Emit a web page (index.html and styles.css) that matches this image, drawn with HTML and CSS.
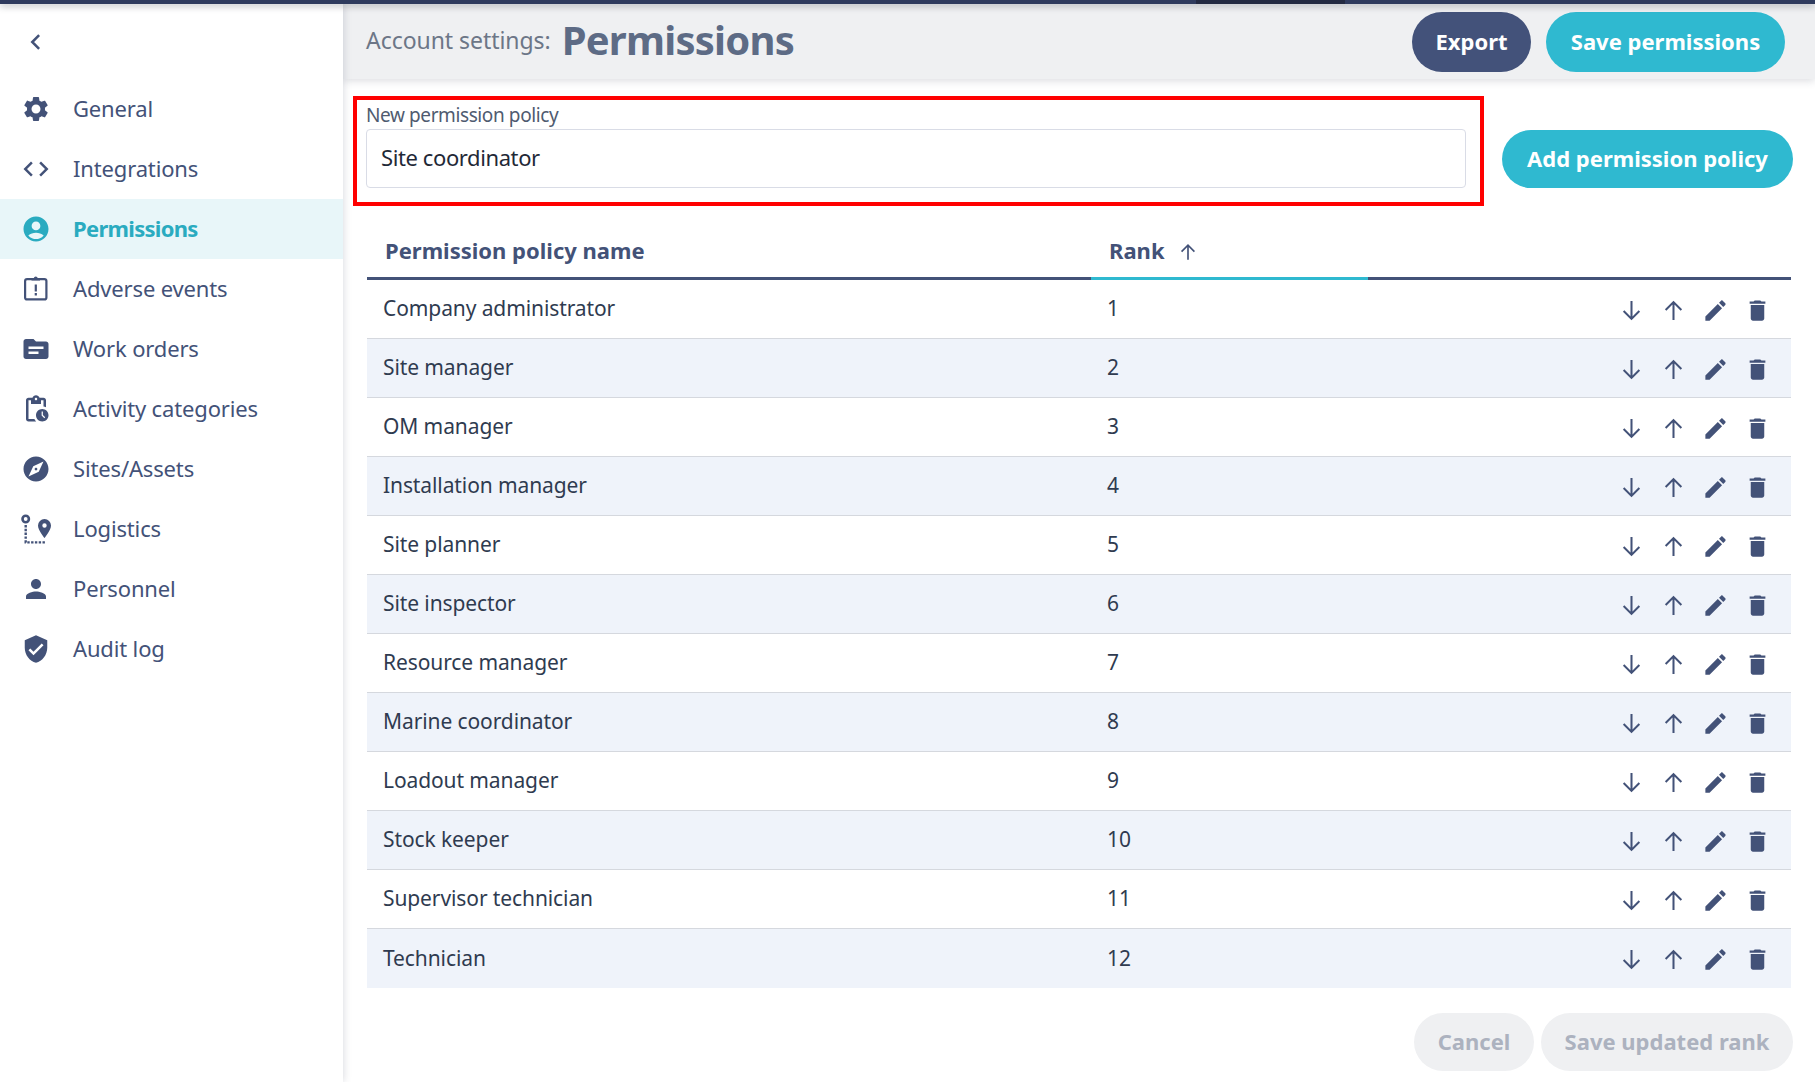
FILE: index.html
```html
<!DOCTYPE html>
<html lang="en">
<head>
<meta charset="utf-8">
<title>Permissions</title>
<link rel="stylesheet" href="styles.css">
</head>
<body>
<svg class="defs" aria-hidden="true">
  <symbol id="i-down" viewBox="0 0 24 24"><path d="M12 3.500v16M5 12.500l7 7 7-7" fill="none" stroke="currentColor" stroke-width="1.800"/></symbol>
  <symbol id="i-up" viewBox="0 0 24 24"><path d="M12 20.500v-16M5 11.500l7-7 7 7" fill="none" stroke="currentColor" stroke-width="1.800"/></symbol>
  <symbol id="i-edit" viewBox="0 0 24 24"><path d="M3 17.250V21h3.750L17.810 9.940l-3.750-3.750L3 17.250zM20.710 7.040c.39-.39.39-1.020 0-1.410l-2.340-2.340c-.39-.39-1.020-.39-1.410 0l-1.830 1.830 3.750 3.750 1.830-1.830z"/></symbol>
  <symbol id="i-trash" viewBox="0 0 24 24"><path d="M6 19c0 1.100.9 2 2 2h8c1.100 0 2-.9 2-2V7H6v12zM19 4h-3.500l-1-1h-5l-1 1H5v2h14V4z"/></symbol>
</svg>
<div class="topbar"><div class="topbar-seg"></div></div>
<div class="app">
  <nav class="sidebar">
    <button class="back" type="button" aria-label="Back">
      <svg class="ico" viewBox="0 0 24 24"><path d="M14.500 6.500L9 12l5.500 5.500" fill="none" stroke="currentColor" stroke-width="2"/></svg>
    </button>
    <ul class="menu">
      <li class="item"><svg class="ico" viewBox="0 0 24 24"><path d="M19.140 12.940c.04-.3.06-.61.06-.94 0-.32-.02-.64-.07-.94l2.030-1.580c.18-.14.23-.41.12-.61l-1.920-3.320c-.12-.22-.37-.29-.59-.22l-2.390.96c-.5-.38-1.030-.7-1.620-.94l-.36-2.540c-.04-.24-.24-.41-.48-.41h-3.840c-.24 0-.43.17-.47.41l-.36 2.540c-.59.24-1.130.57-1.620.94l-2.390-.96c-.22-.08-.47 0-.59.22L2.740 8.870c-.12.21-.08.47.12.61l2.030 1.580c-.05.3-.09.63-.09.94s.02.64.07.94l-2.030 1.580c-.18.14-.23.41-.12.61l1.920 3.320c.12.22.37.29.59.22l2.390-.96c.5.38 1.030.7 1.620.94l.36 2.540c.05.24.24.41.48.41h3.840c.24 0 .44-.17.47-.41l.36-2.540c.59-.24 1.130-.56 1.620-.94l2.390.96c.22.08.47 0 .59-.22l1.920-3.320c.12-.22.07-.47-.12-.61l-2.010-1.580zM12 15.600c-1.980 0-3.600-1.620-3.600-3.600s1.620-3.600 3.600-3.600 3.600 1.620 3.600 3.600-1.620 3.600-3.600 3.600z"/></svg><span>General</span></li>
      <li class="item"><svg class="ico" viewBox="0 0 24 24"><path d="M9.400 16.600L4.800 12l4.600-4.600L8 6l-6 6 6 6 1.400-1.400zm5.200 0l4.600-4.600-4.600-4.600L16 6l6 6-6 6-1.400-1.400z"/></svg><span>Integrations</span></li>
      <li class="item active"><svg class="ico" viewBox="0 0 24 24"><path d="M12 2C6.480 2 2 6.480 2 12s4.480 10 10 10 10-4.480 10-10S17.520 2 12 2zm0 4c1.930 0 3.500 1.570 3.500 3.500S13.930 13 12 13s-3.500-1.570-3.500-3.500S10.070 6 12 6zm0 14c-2.030 0-4.430-.82-6.140-2.880C7.550 15.800 9.680 15 12 15s4.450.8 6.140 2.120C16.430 19.180 14.030 20 12 20z"/></svg><span>Permissions</span></li>
      <li class="item"><svg class="ico" viewBox="0 0 30 30"><rect x="4.100" y="5.100" width="21.300" height="20.300" rx="2" fill="none" stroke="currentColor" stroke-width="2.200"/><path d="M10.500 6.500V4h2.300a2 2 0 0 1 3.900 0H19v2.500z"/><path d="M13.700 10.500h2.200v7h-2.200zM13.700 19h2.200v2.400h-2.200z"/></svg><span>Adverse events</span></li>
      <li class="item"><svg class="ico" viewBox="0 0 24 24"><path d="M20 6h-8l-2-2H4c-1.100 0-2 .9-2 2v12c0 1.100.9 2 2 2h16c1.100 0 2-.9 2-2V8c0-1.100-.9-2-2-2zm-6 10H6v-2h8v2zm4-4H6v-2h12v2z"/></svg><span>Work orders</span></li>
      <li class="item"><svg class="ico" viewBox="0 0 24 24"><path d="M17 12c-2.760 0-5 2.240-5 5s2.240 5 5 5 5-2.240 5-5-2.240-5-5-5zm1.650 7.350L16.500 17.200V14h1v2.790l1.850 1.850-.7.710zM18 3h-3.180C14.400 1.840 13.300 1 12 1s-2.400.84-2.820 2H6c-1.100 0-2 .9-2 2v15c0 1.100.9 2 2 2h6.110c-.59-.57-1.070-1.250-1.400-2H6V5h2v3h8V5h2v5.080c.71.1 1.380.31 2 .6V5c0-1.100-.9-2-2-2zm-6 2c-.55 0-1-.45-1-1s.45-1 1-1 1 .45 1 1-.45 1-1 1z"/></svg><span>Activity categories</span></li>
      <li class="item"><svg class="ico" viewBox="0 0 24 24"><path d="M12 10.900c-.61 0-1.100.49-1.100 1.100s.49 1.100 1.100 1.100c.61 0 1.100-.49 1.100-1.100s-.49-1.100-1.100-1.100zM12 2C6.480 2 2 6.480 2 12s4.480 10 10 10 10-4.480 10-10S17.520 2 12 2zm2.190 12.190L6 18l3.810-8.190L18 6l-3.810 8.190z"/></svg><span>Sites/Assets</span></li>
      <li class="item"><svg class="ico" viewBox="0 0 30 30"><circle cx="4.700" cy="5" r="3.200" fill="none" stroke="currentColor" stroke-width="2.600"/><path d="M4.700 11v17.400H25" fill="none" stroke="currentColor" stroke-width="2.400" stroke-dasharray="2.400 1.400"/><path fill-rule="evenodd" d="M23.500 5a6.500 6.500 0 0 0-6.500 6.500c0 4.700 6.500 12.500 6.500 12.500S30 16.200 30 11.500A6.500 6.500 0 0 0 23.500 5zm0 4.300a2.200 2.200 0 1 1 0 4.400 2.200 2.200 0 0 1 0-4.400z"/></svg><span>Logistics</span></li>
      <li class="item"><svg class="ico" viewBox="0 0 24 24"><path d="M12 12c2.210 0 4-1.790 4-4s-1.790-4-4-4-4 1.790-4 4 1.790 4 4 4zm0 2c-2.670 0-8 1.340-8 4v2h16v-2c0-2.660-5.330-4-8-4z"/></svg><span>Personnel</span></li>
      <li class="item"><svg class="ico" viewBox="0 0 24 24"><path d="M12 1L3 5v6c0 5.550 3.840 10.740 9 12 5.160-1.260 9-6.450 9-12V5l-9-4zm-2 16l-4-4 1.410-1.410L10 14.170l6.590-6.590L18 9l-8 8z"/></svg><span>Audit log</span></li>
    </ul>
  </nav>
  <main class="content">
    <header class="header">
      <div class="heading"><span class="crumb">Account settings:</span><h1 class="title">Permissions</h1></div>
      <div class="actions">
        <button class="btn btn-navy btn-export" type="button">Export</button>
        <button class="btn btn-teal btn-save" type="button">Save permissions</button>
      </div>
    </header>
    <section class="form-row">
      <div class="field-box">
        <label class="field-label" for="policy">New permission policy</label>
        <input class="field-input" id="policy" type="text" value="Site coordinator">
      </div>
      <button class="btn btn-teal btn-add" type="button">Add permission policy</button>
    </section>
    <table class="grid">
      <colgroup><col class="c-name"><col class="c-rank"><col></colgroup>
      <thead>
        <tr>
          <th>Permission policy name</th>
          <th class="sorted">Rank<svg class="sort-ico"><use href="#i-up"/></svg></th>
          <th></th>
        </tr>
      </thead>
      <tbody>
        <tr><td>Company administrator</td><td>1</td><td class="ops"><svg class="op thin"><use href="#i-down"/></svg><svg class="op thin"><use href="#i-up"/></svg><svg class="op"><use href="#i-edit"/></svg><svg class="op"><use href="#i-trash"/></svg></td></tr>
        <tr><td>Site manager</td><td>2</td><td class="ops"><svg class="op thin"><use href="#i-down"/></svg><svg class="op thin"><use href="#i-up"/></svg><svg class="op"><use href="#i-edit"/></svg><svg class="op"><use href="#i-trash"/></svg></td></tr>
        <tr><td>OM manager</td><td>3</td><td class="ops"><svg class="op thin"><use href="#i-down"/></svg><svg class="op thin"><use href="#i-up"/></svg><svg class="op"><use href="#i-edit"/></svg><svg class="op"><use href="#i-trash"/></svg></td></tr>
        <tr><td>Installation manager</td><td>4</td><td class="ops"><svg class="op thin"><use href="#i-down"/></svg><svg class="op thin"><use href="#i-up"/></svg><svg class="op"><use href="#i-edit"/></svg><svg class="op"><use href="#i-trash"/></svg></td></tr>
        <tr><td>Site planner</td><td>5</td><td class="ops"><svg class="op thin"><use href="#i-down"/></svg><svg class="op thin"><use href="#i-up"/></svg><svg class="op"><use href="#i-edit"/></svg><svg class="op"><use href="#i-trash"/></svg></td></tr>
        <tr><td>Site inspector</td><td>6</td><td class="ops"><svg class="op thin"><use href="#i-down"/></svg><svg class="op thin"><use href="#i-up"/></svg><svg class="op"><use href="#i-edit"/></svg><svg class="op"><use href="#i-trash"/></svg></td></tr>
        <tr><td>Resource manager</td><td>7</td><td class="ops"><svg class="op thin"><use href="#i-down"/></svg><svg class="op thin"><use href="#i-up"/></svg><svg class="op"><use href="#i-edit"/></svg><svg class="op"><use href="#i-trash"/></svg></td></tr>
        <tr><td>Marine coordinator</td><td>8</td><td class="ops"><svg class="op thin"><use href="#i-down"/></svg><svg class="op thin"><use href="#i-up"/></svg><svg class="op"><use href="#i-edit"/></svg><svg class="op"><use href="#i-trash"/></svg></td></tr>
        <tr><td>Loadout manager</td><td>9</td><td class="ops"><svg class="op thin"><use href="#i-down"/></svg><svg class="op thin"><use href="#i-up"/></svg><svg class="op"><use href="#i-edit"/></svg><svg class="op"><use href="#i-trash"/></svg></td></tr>
        <tr><td>Stock keeper</td><td>10</td><td class="ops"><svg class="op thin"><use href="#i-down"/></svg><svg class="op thin"><use href="#i-up"/></svg><svg class="op"><use href="#i-edit"/></svg><svg class="op"><use href="#i-trash"/></svg></td></tr>
        <tr><td>Supervisor technician</td><td>11</td><td class="ops"><svg class="op thin"><use href="#i-down"/></svg><svg class="op thin"><use href="#i-up"/></svg><svg class="op"><use href="#i-edit"/></svg><svg class="op"><use href="#i-trash"/></svg></td></tr>
        <tr><td>Technician</td><td>12</td><td class="ops"><svg class="op thin"><use href="#i-down"/></svg><svg class="op thin"><use href="#i-up"/></svg><svg class="op"><use href="#i-edit"/></svg><svg class="op"><use href="#i-trash"/></svg></td></tr>
      </tbody>
    </table>
    <footer class="footer">
      <button class="btn btn-off btn-cancel" type="button">Cancel</button>
      <button class="btn btn-off btn-rank" type="button">Save updated rank</button>
    </footer>
  </main>
</div>
</body>
</html>
```
FILE: styles.css
```css
* { box-sizing: border-box; }
html, body { margin: 0; height: 100%; overflow: hidden; background: #fff; }
body { font-family: "Noto Sans", "Open Sans", sans-serif; color: #2f3b50; }
.defs { display: none; }
.topbar { height: 4px; background: #2f3b5e; position: relative; z-index: 3; box-shadow: 0 2px 7px rgba(30, 34, 50, .35); display: flex; }
.topbar-seg { width: 149px; height: 4px; margin-left: 1196px; background: #232a42; }
.app { display: flex; height: 1078px; }

.sidebar { width: 343px; flex: none; background: #fff; box-shadow: 0 0 8px rgba(60, 66, 90, .22); position: relative; z-index: 2; color: #435278; }
.back { display: flex; align-items: center; justify-content: center; width: 30px; height: 30px; margin: 23px 0 22px 21px; padding: 0; background: none; border: 0; color: #435278; }
.menu { list-style: none; margin: 0; padding: 0; }
.item { display: flex; align-items: center; height: 60px; padding-left: 21px; gap: 22px; font-size: 22px; letter-spacing: -.15px; }
.item span { margin-bottom: 2px; }
.ico { width: 30px; height: 30px; flex: none; fill: currentColor; }
.active { background: #e8f6f9; color: #2aabc0; font-weight: 700; letter-spacing: -.7px; }

.content { flex: 1; min-width: 0; display: flex; flex-direction: column; }
.header { height: 75px; flex: none; display: flex; align-items: center; justify-content: space-between; padding: 0 30px 0 23px; background: #eff0f2; box-shadow: 0 2px 8px rgba(60, 66, 90, .18); }
.heading { display: flex; align-items: center; gap: 11px; padding-bottom: 4px; }
.crumb { font-size: 23px; color: #6c7687; letter-spacing: -.05px; }
.title { margin: 0; font-size: 40px; line-height: 50px; font-weight: 700; color: #5d6b85; letter-spacing: -.75px; }
.actions { display: flex; gap: 15px; }

.btn { height: 58px; border: 0; border-radius: 29px; padding: 0 0 2px; font: 700 22px "Noto Sans", "Open Sans", sans-serif; color: #fff; }
.btn-navy { background: #43527a; }
.btn-teal { background: #2fb9d0; }
.btn-off { background: #eff0f2; color: #acb2bf; }
.btn-export { width: 119px; height: 60px; border-radius: 30px; }
.btn-save { width: 239px; height: 60px; border-radius: 30px; }
.btn-add { width: 291px; align-self: flex-end; margin-bottom: 18px; }
.btn-cancel { width: 120px; }
.btn-rank { width: 252px; }

.form-row { display: flex; gap: 18px; margin: 17px 22px 0 10px; }
.field-box { flex: 1; height: 110px; border: 4px solid #f00; padding: 0 14px 14px 9px; display: flex; flex-direction: column; justify-content: flex-end; }
.field-label { font-size: 19px; line-height: 28px; color: #4f5b70; letter-spacing: -.4px; padding-top: 1px; }
.field-input { height: 60px; width: 100%; border: 1px solid #d9dce6; border-radius: 4px; padding: 0 14px 3px; font: 22px "Noto Sans", "Open Sans", sans-serif; letter-spacing: -.4px; color: #1f2937; background: #fff; outline: 0; }

.grid { width: 1424px; margin: 19px 0 0 24px; border-collapse: separate; border-spacing: 0; table-layout: fixed; flex: none; }
.c-name { width: 724px; }
.c-rank { width: 277px; }
.grid th { height: 55px; padding: 0 0 3px 18px; text-align: left; font-size: 22px; font-weight: 700; color: #435278; border-bottom: 3px solid #435278; }
.grid th.sorted { border-bottom-color: #2fb9d0; }
.sort-ico { width: 22px; height: 22px; margin-left: 12px; vertical-align: -4px; color: #435278; }
.grid td { height: 59px; padding: 0 0 2px 16px; font-size: 21px; letter-spacing: -.1px; border-bottom: 1px solid #d5d8de; }
.grid tbody tr:nth-child(even) { background: #eff3fa; }
.grid tbody tr:last-child td { border-bottom: 0; }
.grid td.ops { padding: 2px 20px 0 0; text-align: right; font-size: 0; }
.op { width: 27px; height: 27px; fill: #435278; color: #435278; margin-left: 15px; vertical-align: middle; }

.footer { display: flex; justify-content: flex-end; gap: 7px; margin: 25px 22px 0 0; }
```
